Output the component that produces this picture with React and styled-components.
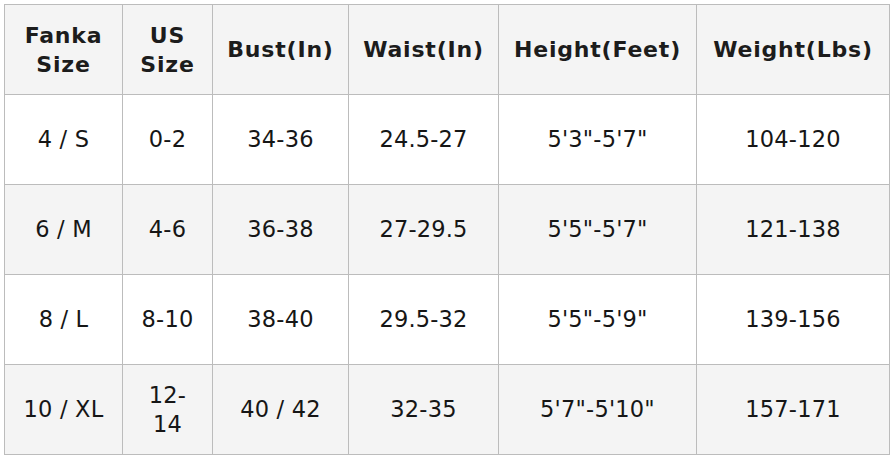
import React from "react";
import styled, { createGlobalStyle } from "styled-components";

const Global = createGlobalStyle`
  html, body { margin: 0; padding: 0; background: #ffffff; }
  body { font-family: "DejaVu Sans", "Noto Sans", sans-serif; }
`;

const Wrap = styled.div`
  padding: 4px 0 0 4px;
`;

const Table = styled.table`
  border-collapse: collapse;
  table-layout: fixed;
  width: 885px;
  color: #1e1e1e;
`;

const Row = styled.tr`
  height: 90px;
  background: ${(p) => (p.$shaded ? "#f4f4f4" : "#ffffff")};
`;

const Head = styled.th`
  border: 1px solid #bcbcbc;
  font-size: 22px;
  font-weight: 700;
  line-height: 29px;
  text-align: center;
  vertical-align: middle;
  padding: 0 4px;
  letter-spacing: 0.8px;
  color: #1c1c1c;
`;

const Cell = styled.td`
  border: 1px solid #bcbcbc;
  font-size: 22.5px;
  font-weight: 400;
  line-height: 29px;
  text-align: center;
  vertical-align: middle;
  padding: 0 6px;
  letter-spacing: 0.2px;
  color: #161616;
`;

const widths = [118, 90, 136, 150, 198, 193];
const headers = [
  ["Fanka", "Size"],
  ["US", "Size"],
  ["Bust(In)"],
  ["Waist(In)"],
  ["Height(Feet)"],
  ["Weight(Lbs)"],
];
const rows = [
  [["4 / S"], ["0-2"], ["34-36"], ["24.5-27"], ["5'3\"-5'7\""], ["104-120"]],
  [["6 / M"], ["4-6"], ["36-38"], ["27-29.5"], ["5'5\"-5'7\""], ["121-138"]],
  [["8 / L"], ["8-10"], ["38-40"], ["29.5-32"], ["5'5\"-5'9\""], ["139-156"]],
  [["10 / XL"], ["12-", "14"], ["40 / 42"], ["32-35"], ["5'7\"-5'10\""], ["157-171"]],
];

const Lines = ({ parts }) =>
  parts.map((t, i) => (
    <React.Fragment key={i}>
      {i > 0 && <br />}
      {t}
    </React.Fragment>
  ));

export default function App() {
  return (
    <>
      <Global />
      <Wrap>
        <Table>
          <colgroup>
            {widths.map((w, i) => (
              <col key={i} style={{ width: w }} />
            ))}
          </colgroup>
          <thead>
            <Row $shaded>
              {headers.map((h, i) => (
                <Head key={i}>
                  <Lines parts={h} />
                </Head>
              ))}
            </Row>
          </thead>
          <tbody>
            {rows.map((r, ri) => (
              <Row key={ri} $shaded={ri % 2 === 1}>
                {r.map((c, ci) => (
                  <Cell key={ci}>
                    <Lines parts={c} />
                  </Cell>
                ))}
              </Row>
            ))}
          </tbody>
        </Table>
      </Wrap>
    </>
  );
}
